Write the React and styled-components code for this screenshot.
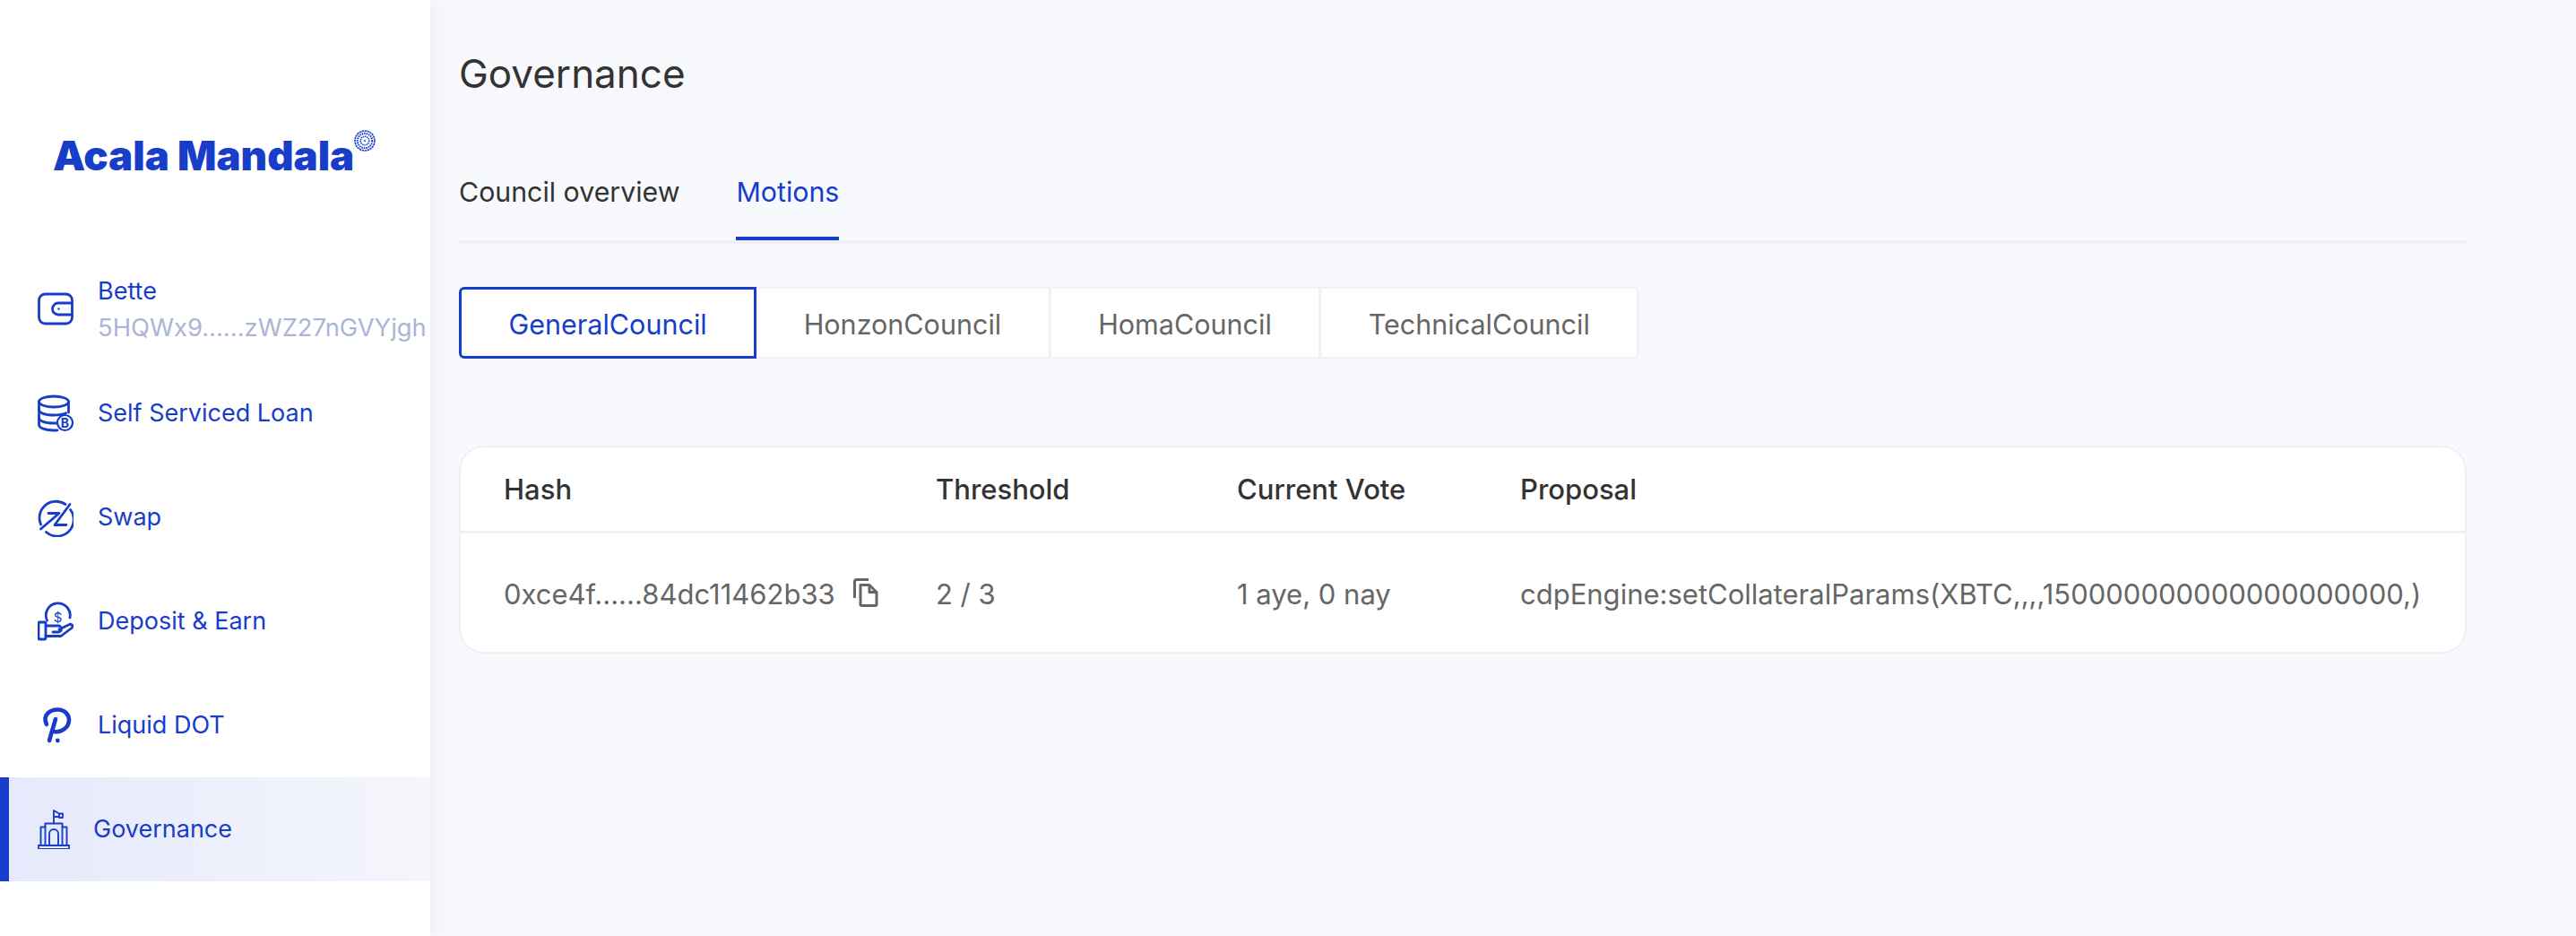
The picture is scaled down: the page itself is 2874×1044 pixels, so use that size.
import React from "react";
import styled, { createGlobalStyle } from "styled-components";

const BLUE = "#173dc9";

const Global = createGlobalStyle`
  html, body { margin: 0; padding: 0; background: #f8f9fd; }
  body { font-family: Inter, "Noto Sans", sans-serif; }
  * { box-sizing: border-box; }
`;

const Page = styled.div`
  display: flex;
  width: 2874px;
  height: 1044px;
  overflow: hidden;
`;

const Sidebar = styled.aside`
  flex: 0 0 480px;
  width: 480px;
  min-width: 0;
  background: #fff;
  box-shadow: 0 0 24px rgba(40, 60, 130, 0.09);
  position: relative;
  z-index: 1;
`;

const LogoArea = styled.div`
  height: 287px;
  padding: 145px 0 0 59px;
  display: flex;
  align-items: flex-start;
`;

const LogoText = styled.span`
  font-family: Inter, "Liberation Sans", sans-serif;
  font-weight: 900;
  font-size: 45.5px;
  line-height: 58px;
  color: ${BLUE};
  white-space: nowrap;
`;

const LogoMark = styled.svg`
  width: 24px;
  height: 24px;
  flex: none;
`;

const Nav = styled.nav`
  display: flex;
  flex-direction: column;
`;

const NavItem = styled.div`
  height: 116px;
  display: flex;
  align-items: center;
  padding-left: ${(p) => (p.$active ? "32px" : "42px")};
  border-left: ${(p) => (p.$active ? `10px solid ${BLUE}` : "0")};
  background: ${(p) =>
    p.$active ? "linear-gradient(90deg, #e5e9fb 0%, #f5f6fb 100%)" : "transparent"};
  color: ${BLUE};
  font-size: 27px;
  line-height: 36px;
  gap: ${(p) => (p.$active ? "26px" : "27px")};
  white-space: nowrap;
`;

const NavIcon = styled.svg`
  flex: none;
  width: ${(p) => p.$w || 40}px;
  height: 44px;
  fill: none;
  stroke: ${BLUE};
  stroke-width: ${(p) => p.$sw || 2.8};
  stroke-linecap: round;
  stroke-linejoin: round;
`;

const AccountText = styled.div`
  display: flex;
  flex-direction: column;
  gap: 4px;
`;

const Address = styled.span`
  color: #abb5d5;
  font-size: 27.4px;
`;

const Main = styled.main`
  flex: 1;
  min-width: 0;
  padding: 50px 122px 0 32px;
  background: #f8f9fd;
`;

const Title = styled.h1`
  margin: 0;
  font-size: 44px;
  line-height: 64px;
  font-weight: 400;
  color: #333;
`;

const Tabs = styled.div`
  margin-top: 80px;
  display: flex;
  gap: 63px;
  border-bottom: 4px solid #eff1f6;
`;

const Tab = styled.div`
  font-size: 30.3px;
  line-height: 40px;
  padding-bottom: 34px;
  color: ${(p) => (p.$active ? BLUE : "#333")};
  position: relative;
  &::after {
    content: "";
    display: ${(p) => (p.$active ? "block" : "none")};
    position: absolute;
    left: 0;
    right: 0;
    bottom: 0;
    height: 4px;
    background: ${BLUE};
  }
`;

const Segments = styled.div`
  margin-top: 48px;
  display: flex;
`;

const Segment = styled.div`
  height: 80px;
  display: flex;
  align-items: center;
  padding: 2px 52.5px 0;
  font-size: 30.5px;
  background: #fff;
  color: ${(p) => (p.$active ? BLUE : "#666")};
  border: ${(p) => (p.$active ? `3px solid ${BLUE}` : "2px solid #eff1f6")};
  border-left-width: ${(p) => (p.$active ? "3px" : "0")};
  border-right-width: 3px;
  border-radius: ${(p) =>
    p.$first ? "6px 0 0 6px" : p.$last ? "0 6px 6px 0" : "0"};
`;

const Card = styled.div`
  margin-top: 97px;
  height: 232px;
  background: #fff;
  border: 2px solid #eef0f6;
  border-radius: 28px;
  overflow: hidden;
`;

const Row = styled.div`
  display: grid;
  grid-template-columns: 482px 336px 316px 1fr;
  align-items: center;
  padding: ${(p) => (p.$head ? "0" : "2px")} 0 0 48px;
  height: ${(p) => p.$h}px;
  font-size: 31px;
  font-weight: ${(p) => (p.$head ? 500 : 400)};
  color: ${(p) => (p.$head ? "#333" : "#666")};
  border-bottom: ${(p) => (p.$head ? "3px solid #eef0f6" : "0")};
  white-space: nowrap;
`;

const HashCell = styled.div`
  display: flex;
  align-items: center;
  gap: 19px;
`;

const CopyIcon = styled.svg`
  width: 30px;
  height: 36px;
  fill: none;
  stroke: #666;
  stroke-width: 3;
  stroke-linejoin: round;
`;

const Mandala = () => (
  <LogoMark viewBox="0 0 24 24" fill="none" stroke={BLUE}>
    <circle cx="12" cy="12" r="11" strokeWidth="1.6" strokeDasharray="2.4 0.6" />
    <circle cx="12" cy="12" r="8.2" strokeWidth="2" strokeDasharray="1.6 0.9" />
    <circle cx="12" cy="12" r="4.8" strokeWidth="1.6" strokeDasharray="1.4 0.8" />
    <circle cx="12" cy="12" r="1.2" fill={BLUE} stroke="none" opacity="0.7" />
  </LogoMark>
);

const WalletIcon = () => (
  <NavIcon viewBox="0 0 40 44">
    <rect x="1.5" y="5" width="37" height="33" rx="7" />
    <path d="M38 15H23a6.5 6.5 0 0 0 0 13H38" />
    <circle cx="23.5" cy="21.5" r="1.2" fill={BLUE} stroke="none" />
  </NavIcon>
);

const CoinsIcon = () => (
  <NavIcon viewBox="8 8 40 44">
    <ellipse cx="26" cy="17" rx="16.5" ry="6" />
    <path d="M9.5 17V43C9.5 46 16 49 26 49C27.5 49 29 49 30 48.8" />
    <path d="M42.5 17V29" />
    <path d="M9.5 26C9.5 29.5 16 32 26 32C31 32 36 31.4 39.5 29.8" />
    <path d="M9.5 35C9.5 38.5 16 41 26 41C27.5 41 28.5 41 29.5 40.8" />
    <circle cx="38.5" cy="40.5" r="8.5" strokeWidth="2.2" />
    <text x="38.5" y="45.6" textAnchor="middle" fontFamily="Inter, sans-serif" fontWeight="700" fontSize="14" fill={BLUE} stroke="none">B</text>
  </NavIcon>
);

const SwapIcon = () => (
  <NavIcon viewBox="8 6 40 44">
    <path d="M11.5 36A18.5 18.5 0 0 1 39 13.5" />
    <path d="M44.5 19.5A18.5 18.5 0 0 1 17.5 44.5" />
    <path d="M20 23.5H32L11.5 41" />
    <path d="M44 13.5L27 36.5H40" />
  </NavIcon>
);

const HandIcon = () => (
  <NavIcon viewBox="8 6 40 44">
    <path d="M18.5 27A13.5 13.5 0 1 1 44 24" />
    <text x="30.5" y="29" textAnchor="middle" fontFamily="Inter, sans-serif" fontSize="15" fill={BLUE} stroke="none">$</text>
    <rect x="9" y="29" width="8" height="19" rx="1" />
    <path d="M17 33H31A3.5 3.5 0 0 1 31 40H25M32 37L43.5 31.5C46 30.5 48 33.5 46 35.5L34 44.5H17" />
  </NavIcon>
);

const DotIcon = () => (
  <NavIcon viewBox="-2 -2 40 44" $sw={4.6}>
    <path d="M8 19C3 8 12 2.5 20.5 2.5C29 2.5 33 9 33 14C33 22 25 28.5 16.5 27" />
    <path d="M18 13L11 37" />
    <circle cx="20.3" cy="37" r="2.4" fill={BLUE} stroke="none" />
  </NavIcon>
);

const GovIcon = () => (
  <NavIcon viewBox="8 6 36 44" $w={36} $sw={1.9}>
    <rect x="8.8" y="46" width="34.4" height="4" />
    <path d="M16.5 46V21.5H35.5V46" />
    <path d="M16.5 25.5H11.5V46M35.5 25.5H40.5V46" />
    <path d="M21 46V33A5 5 0 0 1 26 28A5 5 0 0 1 31 33V46" />
    <path d="M26 21.5V7L32 10.5H36V15H32V10.5M26 14H32" />
  </NavIcon>
);

const CopyGlyph = () => (
  <CopyIcon viewBox="11 9 30 36">
    <path d="M13.5 32V14A2.5 2.5 0 0 1 16 11.5H29" />
    <path d="M20 17.5H30L38 25.5V39A1.5 1.5 0 0 1 36.5 40.5H21.5A1.5 1.5 0 0 1 20 39Z" />
    <path d="M30 17.5V25.5H38" />
  </CopyIcon>
);

const nav = [
  { icon: <CoinsIcon />, label: "Self Serviced Loan" },
  { icon: <SwapIcon />, label: "Swap" },
  { icon: <HandIcon />, label: "Deposit & Earn" },
  { icon: <DotIcon />, label: "Liquid DOT" },
];

export default function App() {
  return (
    <Page>
      <Global />
      <Sidebar>
        <LogoArea>
          <LogoText>Acala Mandala</LogoText>
          <Mandala />
        </LogoArea>
        <Nav>
          <NavItem>
            <WalletIcon />
            <AccountText>
              <span>Bette</span>
              <Address>5HQWx9......zWZ27nGVYjgh</Address>
            </AccountText>
          </NavItem>
          {nav.map((n) => (
            <NavItem key={n.label}>
              {n.icon}
              <span>{n.label}</span>
            </NavItem>
          ))}
          <NavItem $active>
            <GovIcon />
            <span>Governance</span>
          </NavItem>
        </Nav>
      </Sidebar>
      <Main>
        <Title>Governance</Title>
        <Tabs>
          <Tab>Council overview</Tab>
          <Tab $active>Motions</Tab>
        </Tabs>
        <Segments>
          <Segment $active $first>GeneralCouncil</Segment>
          <Segment>HonzonCouncil</Segment>
          <Segment>HomaCouncil</Segment>
          <Segment $last>TechnicalCouncil</Segment>
        </Segments>
        <Card>
          <Row $head $h={96}>
            <div>Hash</div>
            <div>Threshold</div>
            <div>Current Vote</div>
            <div>Proposal</div>
          </Row>
          <Row $h={132}>
            <HashCell>
              <span>0xce4f......84dc11462b33</span>
              <CopyGlyph />
            </HashCell>
            <div>2 / 3</div>
            <div>1 aye, 0 nay</div>
            <div>cdpEngine:setCollateralParams(XBTC,,,,150000000000000000000,)</div>
          </Row>
        </Card>
      </Main>
    </Page>
  );
}
